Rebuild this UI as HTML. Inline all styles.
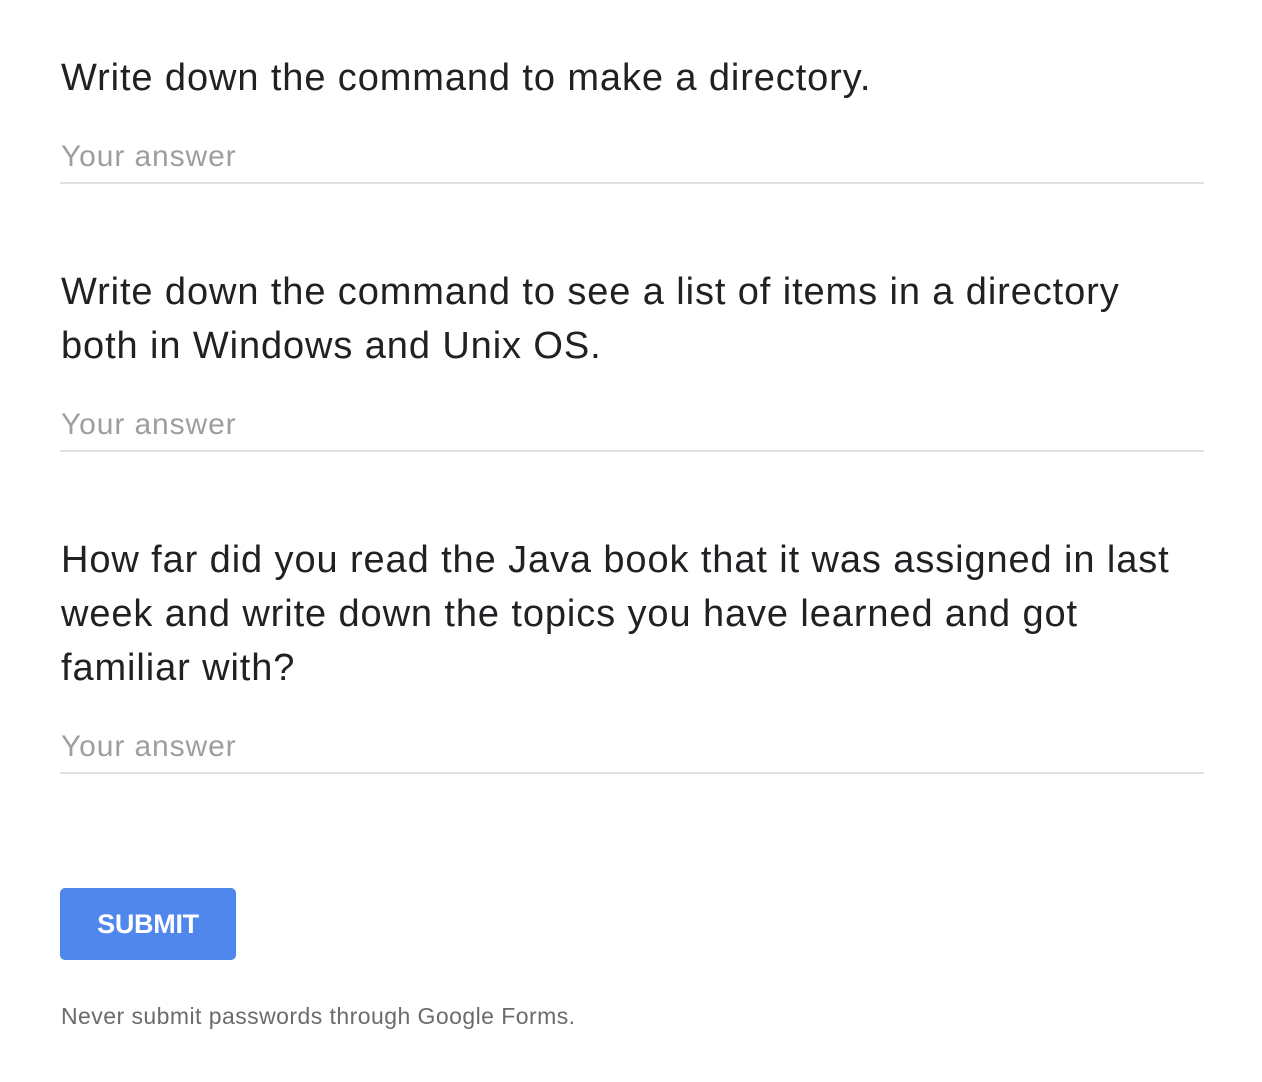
<!DOCTYPE html>
<html><head><meta charset="utf-8"><style>
body{margin:0;background:#fff;width:1262px;height:1082px;position:relative;font-family:"Liberation Sans",Arial,sans-serif;overflow:hidden}
.q{position:absolute;left:61px;font-size:38px;line-height:54px;color:#202124;width:1190px;letter-spacing:0.9px;white-space:nowrap}
.a{position:absolute;left:61px;font-size:30px;color:#9e9e9e;line-height:36px;letter-spacing:0.9px}
.l{position:absolute;left:60px;width:1144px;height:2px;background:#e0e0e0}
.btn{position:absolute;left:60px;top:888px;width:176px;height:72px;background:#4f87ec;border-radius:5px;color:#fff;font-weight:bold;font-size:27px;line-height:72px;text-align:center;letter-spacing:-0.3px}
.f{position:absolute;left:61px;top:1003px;font-size:23px;color:#6b6b6b;letter-spacing:0.45px}
</style></head><body>
<div class="q" style="top:51px">Write down the command to make a directory.</div>
<div class="a" style="top:139px">Your answer</div>
<div class="l" style="top:182px"></div>
<div class="q" style="top:265px">Write down the command to see a list of items in a directory<br>both in Windows and Unix OS.</div>
<div class="a" style="top:407px">Your answer</div>
<div class="l" style="top:450px"></div>
<div class="q" style="top:533px">How far did you read the Java book that it was assigned in last<br>week and write down the topics you have learned and got<br>familiar with?</div>
<div class="a" style="top:729px">Your answer</div>
<div class="l" style="top:772px"></div>
<div class="btn">SUBMIT</div>
<div class="f">Never submit passwords through Google Forms.</div>
</body></html>
